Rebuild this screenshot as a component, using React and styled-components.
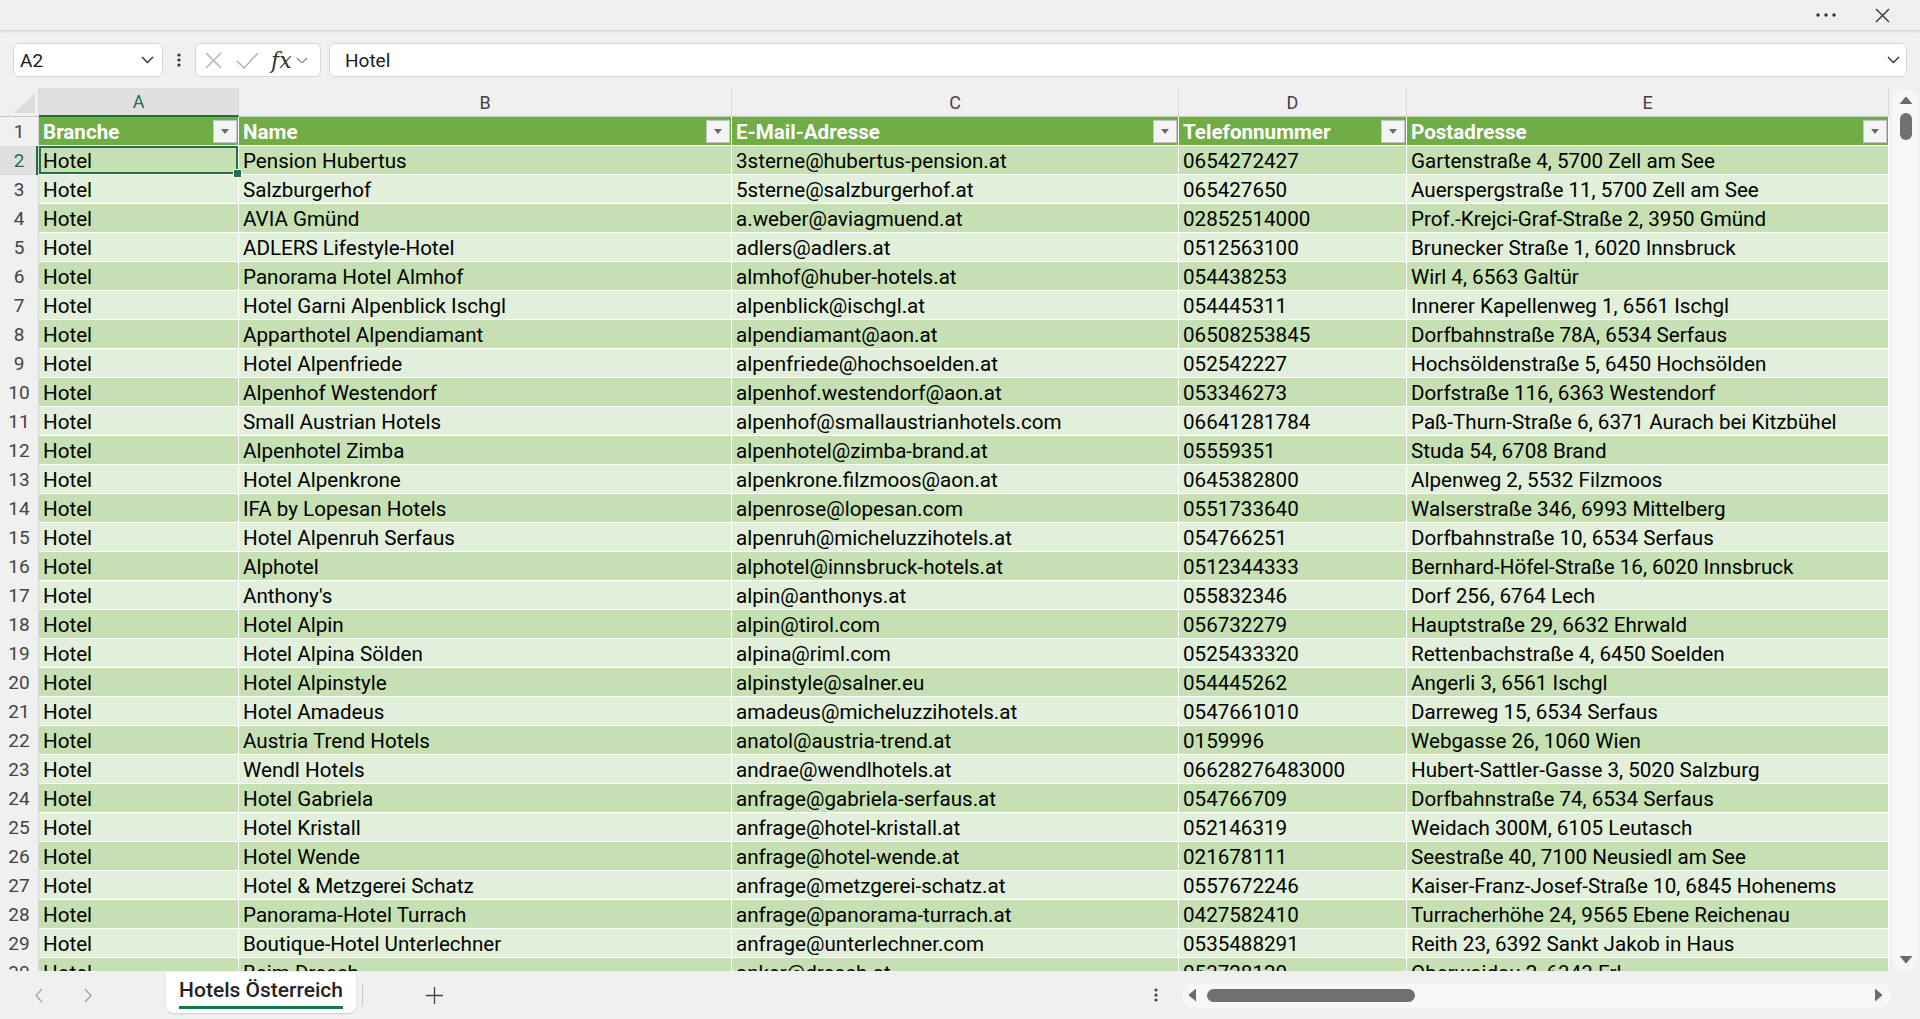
import React from 'react'
import styled, { createGlobalStyle, css } from 'styled-components'

const GREEN = '#1e7145'
const BANDS = { head: '#70ad47', dark: '#c6e0b4', light: '#e2efda' }

const COLUMNS = [
  { key: 'A', width: 200, title: 'Branche' },
  { key: 'B', width: 493, title: 'Name' },
  { key: 'C', width: 447, title: 'E-Mail-Adresse' },
  { key: 'D', width: 228, title: 'Telefonnummer' },
  { key: 'E', width: 482, title: 'Postadresse' },
]

const ROWS = [
  ['Pension Hubertus', '3sterne@hubertus-pension.at', '0654272427', 'Gartenstraße 4, 5700 Zell am See'],
  ['Salzburgerhof', '5sterne@salzburgerhof.at', '065427650', 'Auerspergstraße 11, 5700 Zell am See'],
  ['AVIA Gmünd', 'a.weber@aviagmuend.at', '02852514000', 'Prof.-Krejci-Graf-Straße 2, 3950 Gmünd'],
  ['ADLERS Lifestyle-Hotel', 'adlers@adlers.at', '0512563100', 'Brunecker Straße 1, 6020 Innsbruck'],
  ['Panorama Hotel Almhof', 'almhof@huber-hotels.at', '054438253', 'Wirl 4, 6563 Galtür'],
  ['Hotel Garni Alpenblick Ischgl', 'alpenblick@ischgl.at', '054445311', 'Innerer Kapellenweg 1, 6561 Ischgl'],
  ['Apparthotel Alpendiamant', 'alpendiamant@aon.at', '06508253845', 'Dorfbahnstraße 78A, 6534 Serfaus'],
  ['Hotel Alpenfriede', 'alpenfriede@hochsoelden.at', '052542227', 'Hochsöldenstraße 5, 6450 Hochsölden'],
  ['Alpenhof Westendorf', 'alpenhof.westendorf@aon.at', '053346273', 'Dorfstraße 116, 6363 Westendorf'],
  ['Small Austrian Hotels', 'alpenhof@smallaustrianhotels.com', '06641281784', 'Paß-Thurn-Straße 6, 6371 Aurach bei Kitzbühel'],
  ['Alpenhotel Zimba', 'alpenhotel@zimba-brand.at', '05559351', 'Studa 54, 6708 Brand'],
  ['Hotel Alpenkrone', 'alpenkrone.filzmoos@aon.at', '0645382800', 'Alpenweg 2, 5532 Filzmoos'],
  ['IFA by Lopesan Hotels', 'alpenrose@lopesan.com', '0551733640', 'Walserstraße 346, 6993 Mittelberg'],
  ['Hotel Alpenruh Serfaus', 'alpenruh@micheluzzihotels.at', '054766251', 'Dorfbahnstraße 10, 6534 Serfaus'],
  ['Alphotel', 'alphotel@innsbruck-hotels.at', '0512344333', 'Bernhard-Höfel-Straße 16, 6020 Innsbruck'],
  ["Anthony's", 'alpin@anthonys.at', '055832346', 'Dorf 256, 6764 Lech'],
  ['Hotel Alpin', 'alpin@tirol.com', '056732279', 'Hauptstraße 29, 6632 Ehrwald'],
  ['Hotel Alpina Sölden', 'alpina@riml.com', '0525433320', 'Rettenbachstraße 4, 6450 Soelden'],
  ['Hotel Alpinstyle', 'alpinstyle@salner.eu', '054445262', 'Angerli 3, 6561 Ischgl'],
  ['Hotel Amadeus', 'amadeus@micheluzzihotels.at', '0547661010', 'Darreweg 15, 6534 Serfaus'],
  ['Austria Trend Hotels', 'anatol@austria-trend.at', '0159996', 'Webgasse 26, 1060 Wien'],
  ['Wendl Hotels', 'andrae@wendlhotels.at', '06628276483000', 'Hubert-Sattler-Gasse 3, 5020 Salzburg'],
  ['Hotel Gabriela', 'anfrage@gabriela-serfaus.at', '054766709', 'Dorfbahnstraße 74, 6534 Serfaus'],
  ['Hotel Kristall', 'anfrage@hotel-kristall.at', '052146319', 'Weidach 300M, 6105 Leutasch'],
  ['Hotel Wende', 'anfrage@hotel-wende.at', '021678111', 'Seestraße 40, 7100 Neusiedl am See'],
  ['Hotel & Metzgerei Schatz', 'anfrage@metzgerei-schatz.at', '0557672246', 'Kaiser-Franz-Josef-Straße 10, 6845 Hohenems'],
  ['Panorama-Hotel Turrach', 'anfrage@panorama-turrach.at', '0427582410', 'Turracherhöhe 24, 9565 Ebene Reichenau'],
  ['Boutique-Hotel Unterlechner', 'anfrage@unterlechner.com', '0535488291', 'Reith 23, 6392 Sankt Jakob in Haus'],
  ['Beim Dresch', 'anker@dresch.at', '053728120', 'Oberwaidau 2, 6343 Erl'],
]

const GlobalStyle = createGlobalStyle`
  html, body { margin: 0; padding: 0; }
  body {
    background: #f0f0f0;
    font-family: Roboto, "Liberation Sans", sans-serif;
    overflow: hidden;
  }
  * { box-sizing: border-box; }
`

const Page = styled.div`
  height: 100vh;
  display: flex;
  flex-direction: column;
  background: #f0f0f0;
`

const TitleBar = styled.div`
  position: relative;
  z-index: 2;
  height: 30px;
  flex: none;
  display: flex;
  align-items: center;
  justify-content: flex-end;
  gap: 38px;
  padding-right: 30px;
  background: #f0f0f0;
  box-shadow: 0 1px 3px rgba(0, 0, 0, 0.16);
`

const FormulaBar = styled.div`
  height: 58px;
  flex: none;
  display: flex;
  align-items: flex-start;
  padding: 13px 13px 0 13px;
`

const Box = styled.div`
  height: 34px;
  display: flex;
  align-items: center;
  background: #fff;
  border: 1px solid #d6d6d6;
  border-radius: 6px;
  font-size: 19px;
  color: #1a1a1a;
`

const NameBox = styled(Box)`
  width: 150px;
  padding: 0 8px 0 6px;
  justify-content: space-between;
`

const Kebab = styled.div`
  width: 32px;
  height: 34px;
  display: flex;
  align-items: center;
  justify-content: center;
`

const FxBox = styled(Box)`
  width: 126px;
  padding-left: 9px;
  gap: 14px;
`

const Fx = styled.span`
  font-family: "DejaVu Serif", "Liberation Serif", serif;
  font-style: italic;
  font-size: 22px;
  color: #333;
  margin-left: -2px;
  margin-right: -10px;
`

const InputBox = styled(Box)`
  flex: 1;
  margin-left: 8px;
  padding: 0 6px 0 15px;
  justify-content: space-between;
`

const SheetArea = styled.div`
  flex: 1;
  min-height: 0;
  display: flex;
`

const Viewport = styled.div`
  width: 1889px;
  flex: none;
  overflow: hidden;
`

const Grid = styled.div`
  display: grid;
  grid-template-columns: 39px ${COLUMNS.map(c => c.width + 'px').join(' ')};
  grid-auto-rows: 29px;
`

const Corner = styled.div`
  display: flex;
  align-items: flex-end;
  justify-content: flex-end;
  padding: 0 3px 3px 0;
  border-right: 1px solid #dadada;
  border-bottom: 1px solid #c8c8c8;
`

const ColHead = styled.div`
  display: flex;
  align-items: center;
  justify-content: center;
  font-size: 18px;
  color: #444;
  background: #f0f0f0;
  border-right: 1px solid #dadada;
  border-bottom: 1px solid #c8c8c8;
  ${p => p.$active && css`
    background: #e0e0e0;
    color: ${GREEN};
    border-bottom: 2px solid ${GREEN};
  `}
`

const RowHead = styled.div`
  display: flex;
  align-items: center;
  justify-content: center;
  font-size: 19px;
  color: #444;
  background: #f0f0f0;
  border-right: 1px solid #d6d6d6;
  ${p => p.$active && css`
    background: #e0e0e0;
    color: ${GREEN};
    box-shadow: inset -2px 0 0 ${GREEN};
  `}
`

const Cell = styled.div`
  display: flex;
  align-items: center;
  padding: 1px 4px 0 4px;
  font-size: 20.6px;
  color: #000;
  white-space: nowrap;
  overflow: hidden;
  background: ${p => BANDS[p.$band]};
  border-right: 1px solid #fff;
  border-bottom: 1px solid #fff;
  ${p => p.$band === 'head' && css`
    justify-content: space-between;
    padding-right: 1px;
    color: #fff;
    font-weight: 700;
  `}
  ${p => p.$selected && css`
    position: relative;
    overflow: visible;
    z-index: 1;
    box-shadow: inset 0 0 0 2px ${GREEN};
    &::after {
      content: '';
      position: absolute;
      right: -4px;
      bottom: -4px;
      width: 7px;
      height: 7px;
      background: ${GREEN};
      border: 1px solid #fff;
    }
  `}
`

const FilterButton = styled.span`
  width: 24px;
  height: 23px;
  flex: none;
  display: flex;
  align-items: center;
  justify-content: center;
  background: #f4f4f4;
  border: 1px solid #c4c4c4;
  &::before {
    content: '';
    border-left: 4px solid transparent;
    border-right: 4px solid transparent;
    border-top: 5px solid #6a6a6a;
  }
`

const VScroll = styled.div`
  flex: 1;
  margin: 2px 1px 0 3px;
  display: flex;
  flex-direction: column;
  align-items: center;
  padding: 7px 0 8px;
  background: #f7f7f7;
  border-radius: 12px 12px 14px 14px;
`

const VThumb = styled.div`
  width: 12px;
  height: 27px;
  margin-top: 9px;
  border-radius: 6px;
  background: #707070;
`

const Spacer = styled.div`
  flex: 1;
`

const BottomBar = styled.div`
  height: 48px;
  flex: none;
  display: flex;
  align-items: center;
  background: #f0f0f0;
`

const NavArrows = styled.div`
  display: flex;
  gap: 41px;
  margin-left: 35px;
`

const SheetTab = styled.div`
  align-self: flex-start;
  margin: 1px 0 0 74px;
  width: 190px;
  height: 41px;
  display: flex;
  justify-content: center;
  padding-top: 6px;
  background: #fff;
  border-radius: 0 0 8px 8px;
  box-shadow: 0 1px 2px rgba(0, 0, 0, 0.14);
`

const TabLabel = styled.span`
  align-self: flex-start;
  font-size: 21px;
  font-weight: 500;
  line-height: 25px;
  color: #242424;
  padding-bottom: 3px;
  border-bottom: 3px solid #107c41;
`

const TabDivider = styled.div`
  width: 1px;
  height: 22px;
  margin-left: 6px;
  background: #c8c8c8;
`

const AddSheet = styled.div`
  margin-left: 63px;
  display: flex;
`

const BottomKebab = styled.div`
  display: flex;
  margin-right: 24px;
`

const HScroll = styled.div`
  width: 709px;
  height: 25px;
  margin-right: 29px;
  display: flex;
  align-items: center;
  padding: 0 9px 0 7px;
  background: #f7f7f7;
  border-radius: 13px;
`

const HThumb = styled.div`
  width: 208px;
  height: 13px;
  margin-left: 11px;
  border-radius: 7px;
  background: #707070;
`

const Chevron = ({ size = 13, color = '#333' }) => (
  <svg width={size} height={size * 0.55} viewBox="0 0 13 7" fill="none">
    <path d="M1 1l5.5 5.5L12 1" stroke={color} strokeWidth="1.4" />
  </svg>
)

const VDots = ({ color = '#333' }) => (
  <svg width="4" height="14" viewBox="0 0 4 14">
    <circle cx="2" cy="2" r="1.6" fill={color} />
    <circle cx="2" cy="7" r="1.6" fill={color} />
    <circle cx="2" cy="12" r="1.6" fill={color} />
  </svg>
)

const Triangle = ({ dir }) => {
  const pts = {
    up: '0,7 6,0 12,7',
    down: '0,0 12,0 6,7',
    left: '7,0 7,12 0,6',
    right: '0,0 0,12 7,6',
  }[dir]
  const vertical = dir === 'up' || dir === 'down'
  return (
    <svg width={vertical ? 12 : 7} height={vertical ? 7 : 12} viewBox={vertical ? '0 0 12 7' : '0 0 7 12'}>
      <polygon points={pts} fill="#6a6a6a" strokeLinejoin="round" stroke="#6a6a6a" strokeWidth="1" />
    </svg>
  )
}

export default function App() {
  return (
    <Page>
      <GlobalStyle />
      <TitleBar>
        <svg width="22" height="4" viewBox="0 0 22 4">
          <circle cx="3" cy="2" r="1.7" fill="#333" />
          <circle cx="11" cy="2" r="1.7" fill="#333" />
          <circle cx="19" cy="2" r="1.7" fill="#333" />
        </svg>
        <svg width="15" height="15" viewBox="0 0 15 15">
          <path d="M1 1l13 13M14 1L1 14" stroke="#333" strokeWidth="1.4" />
        </svg>
      </TitleBar>

      <FormulaBar>
        <NameBox>
          <span>A2</span>
          <Chevron />
        </NameBox>
        <Kebab>
          <VDots />
        </Kebab>
        <FxBox>
          <svg width="17" height="17" viewBox="0 0 17 17">
            <path d="M1 1l15 15M16 1L1 16" stroke="#b5b5b5" strokeWidth="1.5" />
          </svg>
          <svg width="23" height="17" viewBox="0 0 23 17">
            <path d="M1 9l7 7L22 1" stroke="#b5b5b5" strokeWidth="1.5" fill="none" />
          </svg>
          <Fx>fx</Fx>
          <Chevron size={12} color="#8a8a8a" />
        </FxBox>
        <InputBox>
          <span>Hotel</span>
          <Chevron />
        </InputBox>
      </FormulaBar>

      <SheetArea>
        <Viewport>
          <Grid>
            <Corner>
              <svg width="21" height="20" viewBox="0 0 21 20">
                <polygon points="21,0 21,20 0,20" fill="#dcdcdc" />
              </svg>
            </Corner>
            {COLUMNS.map(c => (
              <ColHead key={c.key} $active={c.key === 'A'}>{c.key}</ColHead>
            ))}

            <RowHead>1</RowHead>
            {COLUMNS.map(c => (
              <Cell key={c.key} $band="head">
                <span>{c.title}</span>
                <FilterButton />
              </Cell>
            ))}

            {ROWS.map((row, i) => {
              const n = i + 2
              const band = n % 2 === 0 ? 'dark' : 'light'
              return (
                <React.Fragment key={n}>
                  <RowHead $active={n === 2}>{n}</RowHead>
                  <Cell $band={band} $selected={n === 2}>Hotel</Cell>
                  {row.map((v, j) => (
                    <Cell key={j} $band={band}>{v}</Cell>
                  ))}
                </React.Fragment>
              )
            })}
          </Grid>
        </Viewport>
        <VScroll>
          <Triangle dir="up" />
          <VThumb />
          <Spacer />
          <Triangle dir="down" />
        </VScroll>
      </SheetArea>

      <BottomBar>
        <NavArrows>
          <svg width="8" height="15" viewBox="0 0 8 15">
            <path d="M7 1L1 7.5 7 14" stroke="#a3a3a3" strokeWidth="1.3" fill="none" />
          </svg>
          <svg width="8" height="15" viewBox="0 0 8 15">
            <path d="M1 1l6 6.5L1 14" stroke="#a3a3a3" strokeWidth="1.3" fill="none" />
          </svg>
        </NavArrows>
        <SheetTab>
          <TabLabel>Hotels Österreich</TabLabel>
        </SheetTab>
        <TabDivider />
        <AddSheet>
          <svg width="17" height="17" viewBox="0 0 17 17">
            <path d="M8.5 0v17M0 8.5h17" stroke="#444" strokeWidth="1.3" />
          </svg>
        </AddSheet>
        <Spacer />
        <BottomKebab>
          <VDots color="#444" />
        </BottomKebab>
        <HScroll>
          <Triangle dir="left" />
          <HThumb />
          <Spacer />
          <Triangle dir="right" />
        </HScroll>
      </BottomBar>
    </Page>
  )
}
